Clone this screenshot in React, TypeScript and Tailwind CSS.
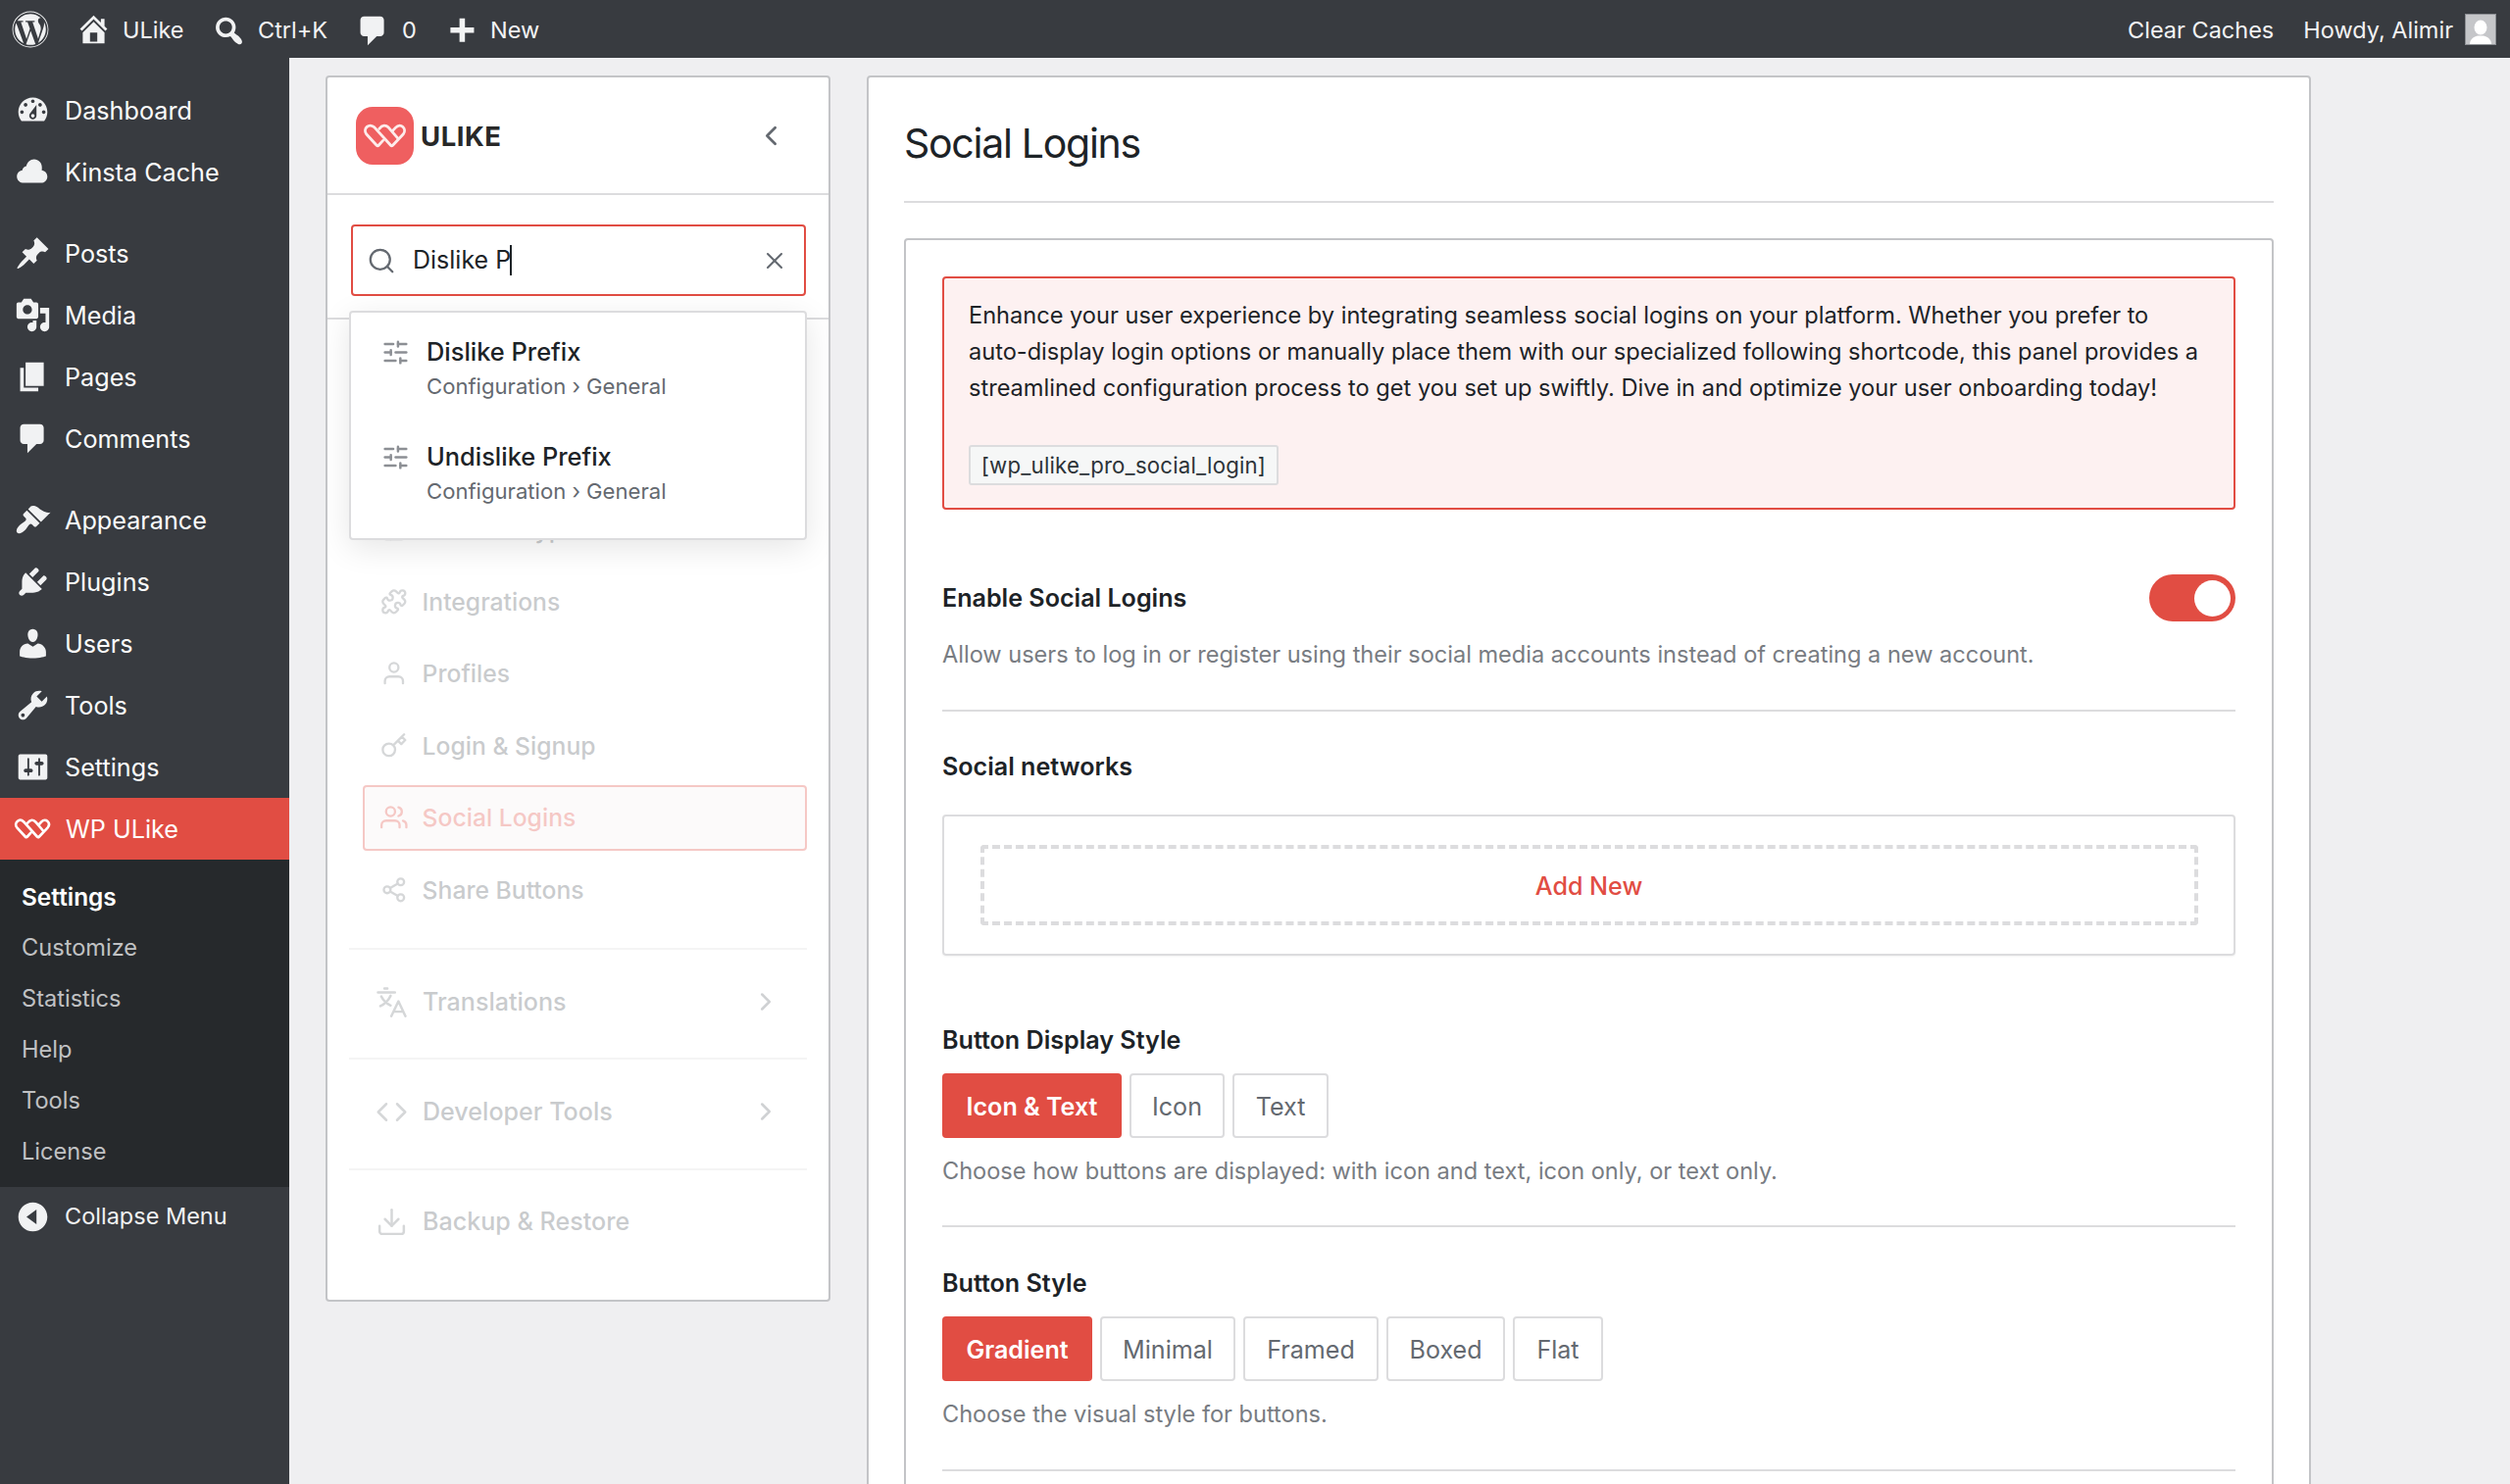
import React from "react";
import type { ReactNode } from "react";
import {
  FiChevronLeft,
  FiChevronRight,
  FiCode,
  FiDownload,
  FiKey,
  FiLayout,
  FiSearch,
  FiShare2,
  FiUser,
  FiUsers,
  FiX,
} from "react-icons/fi";
import { FaWordpress } from "react-icons/fa";
import { Puzzle, SlidersHorizontal } from "lucide-react";

/* ---------- Icons ---------- */

const dash = {
  dashboard:
    "M3.76 16h12.48c1.1-1.37 1.76-3.11 1.76-5 0-4.42-3.58-8-8-8s-8 3.58-8 8c0 1.89.66 3.63 1.76 5zM10 4c.55 0 1 .45 1 1s-.45 1-1 1-1-.45-1-1 .45-1 1-1zM6 6c.55 0 1 .45 1 1s-.45 1-1 1-1-.45-1-1 .45-1 1-1zm8 0c.55 0 1 .45 1 1s-.45 1-1 1-1-.45-1-1 .45-1 1-1zM8.630 11.550L12 7v6c0 1.1-.9 2-2 2s-2-.9-2-2c0-.57.24-1.08.63-1.45zM4 10c.55 0 1 .45 1 1s-.45 1-1 1-1-.45-1-1 .45-1 1-1zm12 0c.55 0 1 .45 1 1s-.45 1-1 1-1-.45-1-1 .45-1 1-1zm-5 3c0-.55-.45-1-1-1s-1 .45-1 1 .45 1 1 1 1-.45 1-1z",
  cloud:
    "M14.9 9c1.7.2 3.1 1.6 3.1 3.5 0 1.900-1.500 3.500-3.500 3.500H5C3 16 1.200 14.500 1.200 12.500c0-1.800 1.300-3.200 3-3.450C4.300 7.800 5.200 6.900 6.400 6.700 6.900 4.600 8.500 3 10.700 3c2.500 0 4.300 2 4.300 4.400 0 .6 0 1.100-.1 1.600z",
  post: "M10.44 3.02l1.82-1.82 6.36 6.35-1.83 1.82c-1.05-.68-2.48-.57-3.41.36l-.75.75c-.92.93-1.04 2.35-.35 3.41l-1.83 1.82-2.41-2.41-2.8 2.79c-.42.42-3.38 2.71-3.8 2.29s1.86-3.39 2.28-3.81l2.79-2.79L4.1 9.36l1.83-1.82c1.05.69 2.48.57 3.4-.36l.75-.75c.93-.92 1.05-2.35.36-3.41z",
  media:
    "M13 11V4c0-.55-.45-1-1-1h-1.67L9 1H5L3.67 3H2c-.55 0-1 .45-1 1v7c0 .55.45 1 1 1h10c.55 0 1-.45 1-1zM7 4.5c1.38 0 2.5 1.12 2.5 2.5S8.380 9.500 7 9.500 4.500 8.380 4.500 7 5.620 4.500 7 4.500zM14 6h5v10.500c0 1.380-1.120 2.500-2.500 2.500S14 17.880 14 16.500s1.120-2.500 2.500-2.500c.17 0 .34.02.5.05V9h-3V6zm-4 8.050V13h2v3.500c0 1.380-1.120 2.500-2.500 2.500S7 17.880 7 16.500 8.120 14 9.500 14c.17 0 .34.02.5.05z",
  page: "M6 15V2h10v13H6zm-1 1h8v2H3V5h2v11z",
  comments:
    "M5 2h9c1.100 0 2 .9 2 2v7c0 1.100-.9 2-2 2h-2l-5 5v-5H5c-1.100 0-2-.9-2-2V4c0-1.100.9-2 2-2z",
  appearance:
    "M14.480 11.060L7.410 3.990l1.500-1.500c.5-.56 2.300-.47 3.510.32 1.210.8 1.430 1.280 2.910 2.100 1.180.64 2.450 1.260 4.450.85zm-.71.71L6.700 4.700 4.930 6.470c-.39.39-.39 1.020 0 1.410l1.060 1.060c.39.39.39 1.030 0 1.420-.6.6-1.430 1.110-2.210 1.690-.35.26-.7.53-1.010.84C1.430 14.230.4 16.080 1.400 17.070c.99 1 2.840-.03 4.180-1.360.31-.31.58-.66.85-1.020.57-.78 1.080-1.610 1.690-2.210.39-.39 1.020-.39 1.410 0l1.060 1.060c.39.39 1.020.39 1.410 0z",
  plugins:
    "M13.110 4.360L9.870 7.600 8 5.730l3.240-3.240c.35-.34 1.050-.2 1.560.32.52.51.66 1.210.31 1.550zm-8 1.770l.91-1.120 9.010 9.010-1.190.84c-.71.71-2.630 1.160-3.820 1.160H6.140L4.900 17.260c-.59.59-1.540.59-2.120 0-.59-.58-.59-1.530 0-2.120l1.240-1.240v-3.880c0-1.130.4-3.190 1.090-3.890zm7.260 3.970l3.240-3.240c.34-.35 1.040-.21 1.550.31.52.51.66 1.210.31 1.550l-3.240 3.250z",
  users:
    "M10 9.250c-2.270 0-2.730-3.440-2.730-3.440C7 4.020 7.820 2 9.970 2c2.160 0 2.980 2.020 2.710 3.810 0 0-.41 3.440-2.680 3.440zm0 2.570L12.720 10c2.390 0 4.520 2.330 4.520 4.530v2.490s-3.650 1.130-7.240 1.130c-3.650 0-7.240-1.130-7.240-1.130v-2.490c0-2.250 1.940-4.480 4.470-4.480z",
  tools:
    "M16.680 9.770c-1.340 1.340-3.300 1.670-4.950.99l-5.410 6.520c-.99.99-2.590.99-3.580 0s-.99-2.590 0-3.570l6.520-5.420c-.68-1.650-.35-3.610.99-4.950 1.280-1.280 3.120-1.620 4.720-1.060l-2.890 2.890 2.820 2.820 2.860-2.870c.53 1.580.18 3.390-1.080 4.650zM3.810 16.210c.4.39 1.040.39 1.430 0 .4-.4.4-1.040 0-1.430-.39-.4-1.030-.4-1.430 0-.39.39-.39 1.030 0 1.430z",
  settings:
    "M18 16V4c0-.55-.45-1-1-1H3c-.55 0-1 .45-1 1v12c0 .55.45 1 1 1h14c.55 0 1-.45 1-1zM8 11h1c.55 0 1 .45 1 1s-.45 1-1 1H8v1.500c0 .28-.22.5-.5.5s-.5-.22-.5-.5V13H6c-.55 0-1-.45-1-1s.45-1 1-1h1V5.500c0-.28.22-.5.5-.5s.5.22.5.5V11zm5-2h-1c-.55 0-1-.45-1-1s.45-1 1-1h1V5.500c0-.28.22-.5.5-.5s.5.22.5.5V7h1c.55 0 1 .45 1 1s-.45 1-1 1h-1v5.500c0 .28-.22.5-.5.5s-.5-.22-.5-.5V9z",
  home: "M16 8.500l1.530 1.530-1.060 1.060L10 4.600l-6.470 6.490-1.060-1.060L10 2.500l4 4v-2h2v4zm-6-2.460l6 5.990V18H4v-5.970zM12 17v-5H8v5h4z",
  search:
    "M12.140 4.180c1.870 1.870 2.110 4.750.72 6.890.12.1.22.21.36.31.2.16.47.36.81.59.34.24.56.39.66.47.42.31.73.57.94.78.32.32.6.65.84 1 .25.35.44.69.59 1.040.14.35.21.68.18 1-.02.32-.14.59-.36.81s-.49.34-.81.36c-.31.02-.65-.04-.99-.19-.35-.14-.7-.34-1.040-.59-.35-.24-.68-.52-1-.84-.21-.21-.47-.52-.77-.93-.1-.13-.25-.35-.47-.66-.22-.32-.4-.57-.56-.78-.16-.2-.29-.35-.44-.5-2.070 1.090-4.690.76-6.440-.98-2.140-2.150-2.140-5.640 0-7.780 2.150-2.150 5.630-2.150 7.780 0zm-1.410 6.360c1.360-1.370 1.360-3.580 0-4.950-1.370-1.370-3.590-1.370-4.950 0-1.370 1.370-1.370 3.580 0 4.950 1.360 1.370 3.580 1.370 4.950 0z",
  plus: "M17 7v3h-5v5H9v-5H4V7h5V2h3v5h5z",
  collapse:
    "M10 2c4.420 0 8 3.580 8 8s-3.580 8-8 8-8-3.580-8-8 3.580-8 8-8zm2 12V6l-5.500 4z",
};

function Dashicon({ name, className = "" }: { name: keyof typeof dash; className?: string }) {
  return (
    <svg viewBox="0 0 20 20" className={"size-[37px] shrink-0 fill-[#f1f2f3] " + className}>
      <path fillRule="evenodd" d={dash[name]} />
    </svg>
  );
}

function UlikeMark({ className }: { className: string }) {
  return (
    <svg viewBox="-2 -2 140 79" className={className} fill="none" stroke="currentColor" strokeLinecap="round" strokeLinejoin="round">
      <path d="M62 53 48 68.500Q45 72 41.500 68.500L9 33C-5 15 18-6 35 11L87 68.500Q90 72 93.500 68.500L127 33C141 15 119-6 103 11L94 20.500" />
      <path d="M50 15C60 2 71 2 80 11L110 46" />
    </svg>
  );
}

function TranslateIcon() {
  return (
    <svg viewBox="0 0 24 24" className="size-[33px]" fill="none" stroke="currentColor" strokeWidth="1.8" strokeLinecap="round" strokeLinejoin="round">
      <path d="M1.800 4.700h12.600M6.600 1.800h2.200M11.200 7.200C9.500 10.800 6.800 13.300 3.600 14.800M4.300 7.700c1.500 3 3.800 5.200 6.900 6.700M11.700 22.300 17 11.300l5.200 11M13.600 19h6.800" />
    </svg>
  );
}

/* ---------- Admin chrome ---------- */

function TopBar() {
  return (
    <header className="flex h-[59px] shrink-0 items-center bg-[#383b40] pl-3 pr-[14px] text-[23.5px] text-[#f3f3f4]">
      <FaWordpress className="size-[38px] text-[#f1f2f3]" />
      <div className="ml-[27px] flex w-[138px] items-center gap-[11px]">
        <Dashicon name="home" />
        <span className="pt-[2px]">ULike</span>
      </div>
      <div className="flex w-[147px] items-center gap-[11px]">
        <Dashicon name="search" className="mt-[3px]" />
        <span className="pt-[2px]">Ctrl+K</span>
      </div>
      <div className="flex w-[90px] items-center gap-[11px]">
        <Dashicon name="comments" className="mt-[3px]" />
        <span className="pt-[2px]">0</span>
      </div>
      <div className="flex items-center gap-[11px]">
        <Dashicon name="plus" className="mt-[7px]" />
        <span className="pt-[2px]">New</span>
      </div>
      <div className="ml-auto flex items-center">
        <span className="pt-[2px]">Clear Caches</span>
        <span className="ml-[30px] pt-[2px]">Howdy, Alimir</span>
        <svg viewBox="0 0 30 30" className="ml-3 size-8 border border-[#8c8f94] bg-[#c5c6c9] fill-white">
          <ellipse cx="15" cy="13" rx="6.500" ry="7.500" />
          <path d="M4 30c0-5 4-7.500 8-8.500h6c4 1 8 3.500 8 8.500z" />
        </svg>
      </div>
    </header>
  );
}

const menuGroups: { label: string; icon: keyof typeof dash }[][] = [
  [
    { label: "Dashboard", icon: "dashboard" },
    { label: "Kinsta Cache", icon: "cloud" },
  ],
  [
    { label: "Posts", icon: "post" },
    { label: "Media", icon: "media" },
    { label: "Pages", icon: "page" },
    { label: "Comments", icon: "comments" },
  ],
  [
    { label: "Appearance", icon: "appearance" },
    { label: "Plugins", icon: "plugins" },
    { label: "Users", icon: "users" },
    { label: "Tools", icon: "tools" },
    { label: "Settings", icon: "settings" },
  ],
];

function AdminMenu() {
  return (
    <aside className="w-[295px] shrink-0 bg-[#383b40] pt-[22px] text-[25.2px] text-[#fbfbfc]">
      <nav className="flex flex-col gap-5">
        {menuGroups.map((group, i) => (
          <div key={i}>
            {group.map((item) => (
              <a key={item.label} className="flex h-[63px] items-center gap-[14px] pl-[15px]">
                <Dashicon name={item.icon} />
                <span className="pt-[2px]">{item.label}</span>
              </a>
            ))}
          </div>
        ))}
      </nav>
      <a className="flex h-[63px] items-center gap-[15px] bg-[#e14d43] pl-[14px] text-white">
        <UlikeMark className="h-[21px] w-[38px] shrink-0 stroke-[10px]" />
        <span className="pt-[2px]">WP ULike</span>
      </a>
      <div className="flex flex-col bg-[#26292c] pb-[10px] pl-[22px] pt-3 text-[23.6px] text-[#c0c1c3]">
        <a className="text-[24.4px] font-semibold leading-[52px] text-white">Settings</a>
        {["Customize", "Statistics", "Help", "Tools", "License"].map((t) => (
          <a key={t} className="leading-[52px]">
            {t}
          </a>
        ))}
      </div>
      <a className="flex h-[61px] items-center gap-[14px] pl-[15px] text-[23.5px] text-[#f1f2f3]">
        <Dashicon name="collapse" />
        <span className="pb-[2px]">Collapse Menu</span>
      </a>
    </aside>
  );
}

/* ---------- Settings navigation ---------- */

function SearchBox() {
  return (
    <div className="h-[127px] border-b-2 border-[#dcdcde] pl-6 pr-[23px] pt-[30px]">
      <div className="relative z-10 h-[73px]">
        <div className="flex h-full items-center rounded-[4px] border-2 border-[#e14d43] bg-white pl-[14px] pr-4">
          <FiSearch className="size-[30px] stroke-[1.8px] text-[#646970]" />
          <span className="ml-[17px] pt-px text-[25px] text-[#1d2327]">Dislike P</span>
          <span className="-ml-px h-[31px] w-[2px] bg-[#1d2327]" />
          <FiX className="ml-auto size-[28px] stroke-[1.8px] text-[#646970]" />
        </div>
        <div className="absolute -left-[2px] top-[88px] flex h-[234px] w-[467px] flex-col gap-[37.5px] rounded-[4px] border-2 border-[#dcdcde] bg-white pl-[31px] pt-[21.500px] shadow-[0_8px_32px_rgba(0,0,0,0.10)]">
          {["Dislike Prefix", "Undislike Prefix"].map((t) => (
            <a key={t} className="flex items-start gap-[17px]">
              <SlidersHorizontal className="mt-1 size-[29px] stroke-2 text-[#8c8f94]" />
              <span className="flex flex-col">
                <span className="text-[25.4px] font-medium leading-9 text-[#1d2327]">{t}</span>
                <span className="text-[22.1px] leading-[34px] text-[#646970]">Configuration › General</span>
              </span>
            </a>
          ))}
        </div>
      </div>
    </div>
  );
}

const subItems: { label: string; icon: ReactNode; active?: boolean }[] = [
  { label: "Content Types", icon: <FiLayout className="size-[27.600px]" /> },
  { label: "Integrations", icon: <Puzzle className="size-[27.600px]" /> },
  { label: "Profiles", icon: <FiUser className="size-[27.600px]" /> },
  { label: "Login & Signup", icon: <FiKey className="size-[27.600px]" /> },
  { label: "Social Logins", icon: <FiUsers className="size-[27.600px]" />, active: true },
  { label: "Share Buttons", icon: <FiShare2 className="size-[27.600px]" /> },
];

const sections: { label: string; icon: ReactNode; expandable: boolean }[] = [
  { label: "Translations", icon: <TranslateIcon />, expandable: true },
  { label: "Developer Tools", icon: <FiCode className="size-[33px] stroke-[1.8px]" />, expandable: true },
  { label: "Backup & Restore", icon: <FiDownload className="size-[33px] stroke-[1.8px]" />, expandable: false },
];

function SettingsNav() {
  return (
    <section className="h-[1251px] w-[515px] shrink-0 overflow-hidden rounded-[4px] border-2 border-[#c3c4c7] bg-white">
      <div className="flex h-[120px] items-center border-b-2 border-[#dcdcde] pl-[29px] pr-[42px]">
        <div className="flex size-[59px] items-center justify-center rounded-[17px] bg-[#ef5f60] text-[#fdeceb]">
          <UlikeMark className="h-[25px] w-[45px] stroke-[9px]" />
        </div>
        <span className="ml-[7px] pt-[3px] text-[27.5px] font-bold tracking-[0.5px] text-[#282828]">ULIKE</span>
        <FiChevronLeft className="ml-auto size-[33px] text-[#646970]" />
      </div>
      <SearchBox />
      <nav className="pl-[22px] pr-[22px] pt-[181px] opacity-30">
        <div className="flex flex-col gap-[7px] pl-[14px]">
          {subItems.map((item) => (
            <a
              key={item.label}
              className={
                item.active
                  ? "flex h-[66.500px] items-center gap-[15px] rounded-[4px] border-2 border-[#e14d43] bg-[#f6f0f1] pl-4 text-[24.7px] font-medium text-[#e14d43]"
                  : "flex h-[66.500px] items-center gap-[15px] border-2 border-transparent pl-4 text-[24.7px] font-medium text-[#50575e]"
              }
            >
              <span className={item.active ? "" : "text-[#787c82]"}>{item.icon}</span>
              <span className="pt-px">{item.label}</span>
            </a>
          ))}
        </div>
        <div className="mt-[26px]">
          {sections.map((s) => (
            <a
              key={s.label}
              className="flex h-[112.300px] items-center gap-[15px] border-t-2 border-[#dcdcde] pb-1 pl-[27px] pr-[27px] text-[25.1px] font-medium text-[#50575e]"
            >
              <span className="text-[#787c82]">{s.icon}</span>
              <span className="pt-px">{s.label}</span>
              {s.expandable && <FiChevronRight className="ml-auto size-[30px] text-[#646970]" />}
            </a>
          ))}
        </div>
      </nav>
    </section>
  );
}

/* ---------- Settings panel ---------- */

function Heading({ children }: { children: ReactNode }) {
  return <h2 className="text-[25.1px] font-semibold leading-9 text-[#1d2327]">{children}</h2>;
}

function Description({ children }: { children: ReactNode }) {
  return <p className="mt-4 text-[23.55px] leading-9 text-[#787c82]">{children}</p>;
}

function Segmented({ options }: { options: { label: string; width: string }[] }) {
  return (
    <div className="mt-4 flex gap-2">
      {options.map((o, i) => (
        <button
          key={o.label}
          className={
            (i === 0
              ? "rounded-[4px] bg-[#e14d43] font-semibold text-white "
              : "rounded-[4px] border-2 border-[#dcdcde] bg-white text-[#646970] ") +
            "h-[66px] pt-[3px] text-center text-[25.1px] whitespace-nowrap " +
            o.width
          }
        >
          {o.label}
        </button>
      ))}
    </div>
  );
}

function Divider({ className }: { className: string }) {
  return <div className={"h-[2px] bg-[#dcdcde] " + className} />;
}

function SettingsPanel() {
  return (
    <section className="h-[1600px] w-[1473px] shrink-0 rounded-[4px] border-2 border-[#c3c4c7] bg-white pl-9 pr-9">
      <h1 className="h-[127.500px] border-b-2 border-[#dcdcde] pt-10 text-[41px] leading-[54px] tracking-[-1.27px] text-[#1d2327]">
        Social Logins
      </h1>
      <div className="mt-[36.500px] h-[1500px] rounded-[4px] border-2 border-[#c3c4c7] px-[37px] pt-[37px]">
        <div className="h-[238px] rounded-[4px] border-2 border-[#e14d43] bg-[#fdf1f1] px-[25px] pt-[20px]">
          <p className="text-[23.580px] leading-[36.900px] text-[#1d2327]">
            Enhance your user experience by integrating seamless social logins on your platform. Whether you prefer to
            auto-display login options or manually place them with our specialized following shortcode, this panel
            provides a streamlined configuration process to get you set up swiftly. Dive in and optimize your user
            onboarding today!
          </p>
          <code className="mt-[39px] flex h-[41px] w-[316px] items-center justify-center rounded-[3px] border-2 border-[#dcdcde] bg-[#f6f7f7] font-[Inter,sans-serif] text-[22.2px] tracking-[0.2px] text-[#2c3338]">
            [wp_ulike_pro_social_login]
          </code>
        </div>

        <div className="mt-[66px] flex h-12 items-center justify-between">
          <Heading>Enable Social Logins</Heading>
          <div className="flex h-12 w-[88px] items-center justify-end rounded-full bg-[#e14d43] pr-[5px]">
            <div className="size-[37px] rounded-full bg-white" />
          </div>
        </div>
        <Description>
          Allow users to log in or register using their social media accounts instead of creating a new account.
        </Description>
        <Divider className="mt-[38px]" />

        <div className="pt-[38px]">
          <Heading>Social networks</Heading>
        </div>
        <div className="mt-[31px] h-36 rounded-[4px] border-2 border-[#dcdcde] px-[36.500px] pt-[29px] shadow-xs">
          <button className="h-[82px] w-full rounded-[4px] border-[4px] border-dashed border-[#dcdcde] pt-[3px] text-[25.1px] font-medium text-[#e14d43]">
            Add New
          </button>
        </div>

        <div className="pt-[68px]">
          <Heading>Button Display Style</Heading>
        </div>
        <Segmented
          options={[
            { label: "Icon & Text", width: "w-[183px]" },
            { label: "Icon", width: "w-[97px]" },
            { label: "Text", width: "w-[98px]" },
          ]}
        />
        <Description>Choose how buttons are displayed: with icon and text, icon only, or text only.</Description>
        <Divider className="mt-[37px]" />

        <div className="pt-[39px]">
          <Heading>Button Style</Heading>
        </div>
        <Segmented
          options={[
            { label: "Gradient", width: "w-[153px]" },
            { label: "Minimal", width: "w-[138px]" },
            { label: "Framed", width: "w-[138px]" },
            { label: "Boxed", width: "w-[121px]" },
            { label: "Flat", width: "w-[92px]" },
          ]}
        />
        <Description>Choose the visual style for buttons.</Description>
        <Divider className="mt-[38px]" />
      </div>
    </section>
  );
}

export default function App() {
  return (
    <div className="flex h-[1514px] w-[2560px] flex-col overflow-hidden bg-[#efeff1] font-[Inter,sans-serif]">
      <TopBar />
      <div className="flex flex-1 items-stretch overflow-hidden">
        <AdminMenu />
        <main className="flex flex-1 items-start gap-[37px] overflow-hidden pl-[37px] pt-[18px]">
          <SettingsNav />
          <SettingsPanel />
        </main>
      </div>
    </div>
  );
}
